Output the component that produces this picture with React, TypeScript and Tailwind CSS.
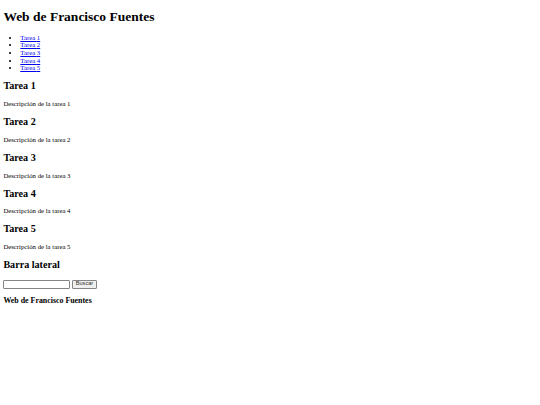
const tareas = [1, 2, 3, 4, 5];

export default function App() {
  return (
    <div className="bg-white min-h-[405px] pt-px -mt-px">
      <div className="m-[3.375px] font-['Liberation_Serif',serif] text-[6.75px] leading-[7.76px] text-black">
        <header>
          <h1 className="text-[13.5px] font-bold leading-[15.53px] my-[9.05px]">Web de Francisco Fuentes</h1>
          <nav>
            <ul className="list-disc pl-[16.875px] my-[6.75px]">
              {tareas.map((n) => (
                <li key={n} className="leading-[7.7px]">
                  <a href={`#tarea${n}`} className="text-[#0000ee] underline">
                    Tarea {n}
                  </a>
                </li>
              ))}
            </ul>
          </nav>
        </header>

        <main>
          {tareas.map((n) => (
            <section key={n} id={`tarea${n}`}>
              <h2 className="text-[10.125px] font-bold leading-[11.64px] my-[8.18px]">Tarea {n}</h2>
              <p className="my-[6.75px] leading-[7.76px]">Descripción de la tarea {n}</p>
            </section>
          ))}
        </main>

        <aside>
          <h2 className="text-[10.125px] font-bold leading-[11.64px] my-[8.18px]">Barra lateral</h2>
          <form className="mt-[9.2px] mb-0 flex items-center gap-[1.8px]" onSubmit={(e) => e.preventDefault()}>
            <input
              type="text"
              className="w-[67px] h-[8.8px] border border-[#858585] rounded-[1px] bg-white px-[1px] text-[5.6px] font-['Liberation_Sans',sans-serif]"
            />
            <button
              type="submit"
              className="h-[8.8px] px-[2.6px] border border-[#858585] rounded-[1px] bg-[#efefef] text-[5.6px] leading-none text-[#333] font-['Liberation_Sans',sans-serif]"
            >
              Buscar
            </button>
          </form>
        </aside>

        <footer>
          <h3 className="text-[7.9px] font-bold leading-[9.08px] my-[6.9px]">Web de Francisco Fuentes</h3>
        </footer>
      </div>
    </div>
  );
}
